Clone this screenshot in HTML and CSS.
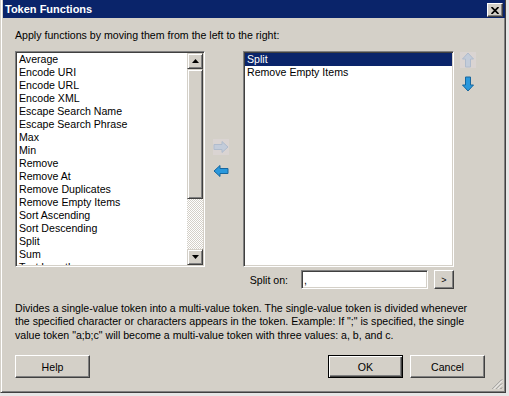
FILE: index.html
```
<!doctype html>
<html>
<head>
<meta charset="utf-8">
<link rel="stylesheet" href="styles.css">
<title>Token Functions</title>
</head>
<body>
<div class="window">
  <div class="titlebar">
    <span class="title">Token Functions</span>
    <button class="close" type="button"><svg width="8" height="7" viewBox="0 0 8 7"><path d="M0.5 0 L7.5 7 M7.5 0 L0.5 7" stroke="#000" stroke-width="1.7"/></svg></button>
  </div>

  <div class="client">
    <p class="prompt">Apply functions by moving them from the left to the right:</p>

    <div class="lists">
      <div class="listbox available">
        <ul class="items">
          <li>Average</li>
          <li>Encode URI</li>
          <li>Encode URL</li>
          <li>Encode XML</li>
          <li>Escape Search Name</li>
          <li>Escape Search Phrase</li>
          <li>Max</li>
          <li>Min</li>
          <li>Remove</li>
          <li>Remove At</li>
          <li>Remove Duplicates</li>
          <li>Remove Empty Items</li>
          <li>Sort Ascending</li>
          <li>Sort Descending</li>
          <li>Split</li>
          <li>Sum</li>
          <li>Text Length</li>
        </ul>
        <div class="scrollbar">
          <button class="sb-btn" type="button"><svg width="7" height="4" viewBox="0 0 7 4"><path d="M3.5 0 L7 4 H0 Z"/></svg></button>
          <div class="sb-track"><div class="sb-thumb"></div></div>
          <button class="sb-btn" type="button"><svg width="7" height="4" viewBox="0 0 7 4"><path d="M0 0 H7 L3.5 4 Z"/></svg></button>
        </div>
      </div>

      <div class="mover">
        <svg class="icon" width="16" height="16" viewBox="0 0 16 16"><rect width="16" height="16" fill="#dad4d2"/><path d="M15 8 L9 2.5 V5.5 H1 V10.5 H9 V13.5 Z" fill="#c3ccda" stroke="#b0bccd"/></svg>
        <svg class="icon" width="16" height="16" viewBox="0 0 16 16"><path d="M1 8 L7 2.5 V5.5 H15 V10.5 H7 V13.5 Z" fill="#2a98dc" stroke="#16679f"/></svg>
      </div>

      <div class="applied-col">
        <div class="listbox applied">
          <ul class="items">
            <li class="selected">Split</li>
            <li>Remove Empty Items</li>
          </ul>
        </div>
        <div class="split-row">
          <label for="splitOn">Split on:</label>
          <input class="field" id="splitOn" value=",">
          <button class="small-btn" type="button">&gt;</button>
        </div>
      </div>

      <div class="order">
        <svg class="icon" width="16" height="16" viewBox="0 0 16 16"><rect width="16" height="16" fill="#dad4d2"/><path d="M8 1 L13.5 7 H10.5 V15 H5.5 V7 H2.5 Z" fill="#c3ccda" stroke="#b0bccd"/></svg>
        <svg class="icon" width="16" height="16" viewBox="0 0 16 16"><path d="M8 15 L13.5 9 H10.5 V1 H5.5 V9 H2.5 Z" fill="#2a98dc" stroke="#16679f"/></svg>
      </div>
    </div>

    <p class="desc">Divides a single-value token into a multi-value token. The single-value token is divided whenever<br>the specified character or characters appears in the token. Example: If ";" is specified, the single<br>value token "a;b;c" will become a multi-value token with three values: a, b, and c.</p>

    <div class="buttons">
      <button class="btn" type="button">Help</button>
      <button class="btn default" type="button">OK</button>
      <button class="btn" type="button">Cancel</button>
    </div>
  </div>

  <svg class="grip" width="12" height="12" viewBox="0 0 12 12">
    <path d="M11 1.5 L1.5 11 M11 5.5 L5.5 11 M11 9.5 L9.5 11" stroke="#808080"/>
    <path d="M11 2.5 L2.5 11 M11 6.5 L6.5 11" stroke="#fff"/>
  </svg>
</div>
</body>
</html>
```
FILE: styles.css
```
* {
    box-sizing: border-box;
}
body {
    margin: 0;
    background: #e6e6e6;
    font-family: "Liberation Sans", Arial, sans-serif;
    font-size: 10.6px;
    color: #000;
}
button,
input,
label {
    font: inherit;
    font-weight: normal;
    color: #000;
    margin: 0;
}

.window {
    position: relative;
    width: 506px;
    height: 393px;
    background: #d4d0c8;
    border-left: 1px solid #d4d0c8;
    border-right: 1px solid #404040;
    border-bottom: 1px solid #404040;
    box-shadow: inset 1px 0 #fff, inset -1px -1px #808080;
    padding-left: 2px;
}

/* title bar */
.titlebar {
    display: flex;
    align-items: center;
    height: 18px;
    padding-left: 2px;
    background: #0a246a;
    color: #fff;
}
.title {
    flex: 1;
    font-size: 11px;
    font-weight: bold;
}
.close {
    align-self: flex-start;
    display: flex;
    align-items: center;
    justify-content: center;
    width: 16px;
    height: 14px;
    margin: 3px 2px 0 0;
    padding: 0;
    background: #d4d0c8;
    border: 1px solid;
    border-color: #fff #404040 #404040 #fff;
    box-shadow: inset -1px -1px #808080;
}

/* client area */
.client {
    padding: 11px 0 0 12px;
}
.prompt {
    margin: 0 0 9px;
    line-height: 13px;
}
.lists {
    display: flex;
    align-items: flex-start;
}

.listbox {
    background: #fff;
    border: 1px solid;
    border-color: #808080 #fff #fff #808080;
    box-shadow: inset 1px 1px #404040, inset -1px -1px #d4d0c8;
    padding: 1px;
}
.available {
    display: flex;
    width: 190px;
    height: 216px;
}
.applied {
    height: 216px;
}
.items {
    flex: 1;
    list-style: none;
    margin: 0;
    padding: 0;
    overflow: hidden;
}
.items li {
    height: 13px;
    line-height: 13px;
    padding-left: 2px;
    white-space: nowrap;
}
.items li.selected {
    background: #0a246a;
    color: #fff;
}

/* scrollbar */
.scrollbar {
    display: flex;
    flex-direction: column;
    width: 16px;
}
.sb-btn,
.sb-thumb {
    background: #d4d0c8;
    border: 1px solid;
    border-color: #d4d0c8 #404040 #404040 #d4d0c8;
    box-shadow: inset 1px 1px #fff, inset -1px -1px #808080;
}
.sb-btn {
    display: flex;
    align-items: center;
    justify-content: center;
    height: 16px;
    padding: 0;
}
.sb-btn svg {
    display: block;
}
.sb-track {
    flex: 1;
    background: repeating-conic-gradient(#fff 0 25%, #d4d0c8 0 50%) 0 0 / 2px 2px;
}
.sb-thumb {
    height: 130px;
}

/* arrow columns */
.icon {
    display: block;
}
.mover {
    display: flex;
    flex-direction: column;
    gap: 8px;
    width: 38px;
    padding: 88px 0 0 8px;
}
.order {
    display: flex;
    flex-direction: column;
    gap: 8px;
    padding: 1px 0 0 6px;
}

.applied-col {
    width: 211px;
}
.split-row {
    display: flex;
    align-items: center;
    justify-content: flex-end;
    height: 19px;
    margin-top: 3px;
}
.split-row label {
    margin-right: 13px;
}
.field {
    width: 127px;
    height: 19px;
    padding: 0 2px;
    background: #fff;
    border: 1px solid;
    border-color: #808080 #fff #fff #808080;
    box-shadow: inset 1px 1px #404040, inset -1px -1px #d4d0c8;
    outline: none;
}
.small-btn {
    width: 20px;
    height: 19px;
    margin-left: 6px;
    padding: 0;
    font-size: 9px;
}

.desc {
    margin: 13px 0 0;
    line-height: 13.4px;
    white-space: nowrap;
}

/* push buttons */
.buttons {
    display: flex;
    gap: 7px;
    width: 470px;
    margin-top: 13px;
}
.btn,
.small-btn {
    background: #d4d0c8;
    border: 1px solid;
    border-color: #fff #404040 #404040 #fff;
    box-shadow: inset -1px -1px #808080;
}
.btn {
    width: 75px;
    height: 23px;
    padding: 0;
}
.btn.default {
    margin-left: auto;
    border-color: #000;
    box-shadow: inset 1px 1px #fff, inset -1px -1px #404040, inset -2px -2px #808080;
}

.grip {
    position: absolute;
    right: 2px;
    bottom: 2px;
}
```
